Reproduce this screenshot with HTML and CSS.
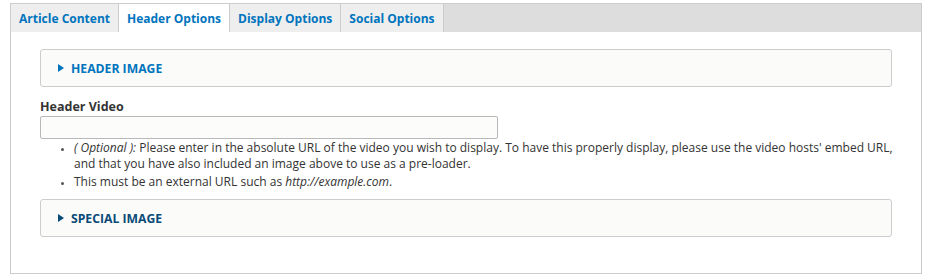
FILE: index.html
```html
<!DOCTYPE html>
<html>
<head>
<meta charset="utf-8">
<link rel="stylesheet" href="styles.css">
</head>
<body>
<div class="tabs-wrap">
  <ul class="tabs">
    <li class="tab"><a href="#">Article Content</a></li>
    <li class="tab active"><a href="#">Header Options</a></li>
    <li class="tab"><a href="#">Display Options</a></li>
    <li class="tab"><a href="#">Social Options</a></li>
  </ul>
  <div class="pane">
    <details class="box">
      <summary class="box-title"><span class="arrow"></span>HEADER IMAGE</summary>
    </details>
    <div class="field">
      <label class="label">Header Video</label>
      <input class="text-input" type="text">
      <ul class="desc">
        <li><em>( Optional ):</em> Please enter in the absolute URL of the video you wish to display. To have this properly display, please use the video hosts' embed URL, and that you have also included an image above to use as a pre-loader.</li>
        <li>This must be an external URL such as <em>http://example.com</em>.</li>
      </ul>
    </div>
    <details class="box">
      <summary class="box-title dark"><span class="arrow"></span>SPECIAL IMAGE</summary>
    </details>
  </div>
</div>
</body>
</html>
```
FILE: styles.css
```css
html, body { margin: 0; padding: 0; background: #fff; }
body {
  font-family: "Open Sans", "DejaVu Sans", sans-serif;
  color: #333;
  padding: 3px 11px 0 10px;
}
.tabs-wrap { width: 912px; }
.tabs {
  list-style: none;
  margin: 0;
  padding: 0;
  display: flex;
  background: #ddd;
  border: 1px solid #ccc;
  border-bottom: none;
  height: 28px;
}
.tab {
  background: #eee;
  border-right: 1px solid #ccc;
  display: flex;
  align-items: center;
  padding: 0 8px;
}
.tab.active { background: #fff; }
.tab a {
  color: #0074bd;
  font-weight: bold;
  font-size: 12px;
  text-decoration: none;
}
.pane {
  border: 1px solid #ccc;
  border-top: none;
  padding: 17px 29px 36px 29px;
}
.box {
  border: 1px solid #ccc;
  border-radius: 3px;
  background: #fbfbfa;
  height: 36px;
}
.box-title {
  list-style: none;
  display: flex;
  align-items: center;
  height: 36px;
  padding-left: 17px;
  color: #0074bd;
  font-weight: bold;
  font-size: 12.2px;
  cursor: pointer;
}
.box-title::-webkit-details-marker { display: none; }
.box-title.dark { color: #0a4a77; }
.arrow {
  width: 0; height: 0;
  border-top: 4px solid transparent;
  border-bottom: 4px solid transparent;
  border-left: 6px solid currentColor;
  margin-right: 7px;
}
.field { margin: 12px 0 9px; }
.label {
  display: block;
  font-weight: bold;
  font-size: 12.5px;
  color: #333;
  line-height: 15px;
}
.text-input {
  display: block;
  box-sizing: border-box;
  width: 458px;
  height: 23px;
  margin-top: 2px;
  border: 1px solid #b8b8b8;
  border-radius: 2px;
  background: #fcfcfa;
}
.desc {
  margin: 1px -10px 0 0;
  padding-left: 34px;
  font-size: 12px;
  line-height: 16px;
  color: #333;
}
.desc li { margin-bottom: 2px; }
.desc li::marker { font-size: 9px; color: #555; }
```
